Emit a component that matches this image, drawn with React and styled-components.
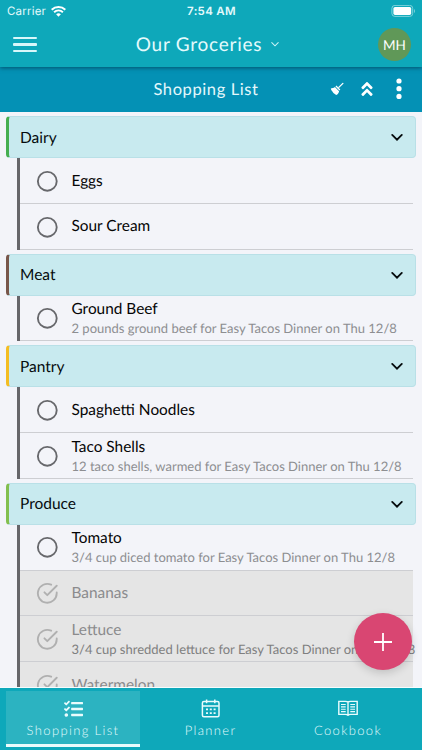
import React from 'react'
import styled, { createGlobalStyle } from 'styled-components'
import { FaAngleDoubleUp, FaTasks } from 'react-icons/fa'

const GlobalStyle = createGlobalStyle`
  * {
    box-sizing: border-box;
  }

  body {
    margin: 0;
    background: #f3f4f9;
    font-family: Lato, 'Open Sans', sans-serif;
    text-rendering: geometricPrecision;
  }
`

const Screen = styled.div`
  position: relative;
  width: 422px;
  height: 750px;
  display: flex;
  flex-direction: column;
  overflow: hidden;
  background: #f3f4f9;
`

const TopArea = styled.header`
  flex: none;
  height: 67px;
  background: #0ea8ba;
  color: #e4fafc;
  box-shadow: 0 1px 4px rgba(0, 40, 60, 0.6);
  z-index: 1;
`

const StatusBar = styled.div`
  height: 22px;
  padding: 0 6px 0 7px;
  display: grid;
  grid-template-columns: 1fr auto 1fr;
  align-items: center;
  font-family: Inter, sans-serif;
  font-size: 11.5px;
`

const Carrier = styled.div`
  display: flex;
  align-items: center;
  gap: 5px;
  letter-spacing: 0.2px;
`

const Clock = styled.div`
  font-weight: 600;
  letter-spacing: 0.3px;
`

const Battery = styled.svg`
  width: 25px;
  height: 13px;
  justify-self: end;
`

const TitleBar = styled.div`
  height: 45px;
  padding: 0 11px 0 13px;
  display: grid;
  grid-template-columns: 32px 1fr 41px;
  align-items: center;
`

const MenuButton = styled.div`
  width: 24px;
  height: 15px;
  display: flex;
  flex-direction: column;
  justify-content: space-between;

  span {
    height: 2.3px;
    border-radius: 1px;
    background: #d8f7fa;
  }
`

const Household = styled.div`
  display: flex;
  align-items: center;
  justify-content: center;
  gap: 9px;
  font-size: 19px;
  letter-spacing: 0.75px;
  line-height: 24px;
`

const Avatar = styled.div`
  width: 33px;
  height: 33px;
  border-radius: 50%;
  justify-self: end;
  display: flex;
  align-items: center;
  justify-content: center;
  background: #609858;
  color: #fff;
  font-size: 13.5px;
`

const SubHeader = styled.div`
  flex: none;
  height: 45px;
  padding-right: 10px;
  display: grid;
  grid-template-columns: 1fr auto 1fr;
  align-items: center;
  background: #0491b5;
  color: #e4f8fc;
  font-size: 16.5px;
  letter-spacing: 0.6px;
`

const PageTitle = styled.div`
  grid-column: 2;
  padding-bottom: 1px;
`

const Tools = styled.div`
  padding: 0 9px 1px 0;
  display: flex;
  align-items: center;
  justify-content: flex-end;
  gap: 14px;
  color: #fff;
`

const MoreIcon = styled.svg`
  width: 8px;
  height: 22px;
  margin-left: 5px;
  fill: #fff;
`

const List = styled.main`
  flex: 1 1 auto;
  min-height: 0;
  padding: 4.3px 6.5px 0 6px;
  overflow: hidden;
`

const GroupHeader = styled.div`
  height: 41.9px;
  padding: 1px 11.5px 0 11px;
  display: flex;
  align-items: center;
  justify-content: space-between;
  border: 1px solid #b9e0e7;
  border-left: 3px solid ${({ $color }) => $color};
  border-radius: 4px;
  background: #c8eaef;
  color: #050b0d;
  font-size: 15.5px;
`

const Items = styled.div`
  margin: 0 2.5px 4px 10.5px;
  border-left: 3px solid #66666a;
`

const Item = styled.div`
  height: 45.8px;
  padding: 1px 0 0 16px;
  display: flex;
  align-items: center;
  gap: 13.4px;
  border-bottom: 1px solid #cdced2;
  background: ${({ $done }) => ($done ? '#e5e5e5' : 'transparent')};
  color: ${({ $done }) => ($done ? '#8b8b8d' : '#050505')};
  white-space: nowrap;
`

const Check = styled.svg`
  flex: none;
  width: 22.6px;
  height: 22.6px;
  fill: none;
  stroke: ${({ $done }) => ($done ? '#b0b0b0' : '#67686c')};
  stroke-width: 2;
  stroke-linecap: round;
  stroke-linejoin: round;
`

const ItemName = styled.div`
  font-size: 15.4px;
  line-height: 19px;
`

const ItemNote = styled.div`
  font-size: 13px;
  line-height: 18px;
  color: ${({ $done }) => ($done ? '#7f7f80' : '#8d8e91')};
`

const Fab = styled.div`
  position: absolute;
  left: 354px;
  top: 613px;
  width: 58px;
  height: 57px;
  border-radius: 50%;
  display: flex;
  align-items: center;
  justify-content: center;
  background: #d94672;
  box-shadow: 0 3px 8px rgba(0, 0, 0, 0.16);
`

const Nav = styled.nav`
  flex: none;
  height: 63px;
  padding: 3px 7px 3px 6px;
  display: grid;
  grid-template-columns: 134px 1fr 134px;
  gap: 3px;
  background: #0ea8ba;
  background-clip: padding-box;
  border-top: 1px solid #f6fdfe;
`

const Tab = styled.div`
  padding-top: 8px;
  display: flex;
  flex-direction: column;
  align-items: center;
  gap: 3px;
  background: ${({ $active }) => ($active ? '#2cb3c1' : 'transparent')};
  border-bottom: 3px solid ${({ $active }) => ($active ? '#e9fbfc' : 'transparent')};
  color: #e2fbfd;
  font-size: 13px;
  font-weight: 300;
  line-height: 17px;
  letter-spacing: 1.35px;

  svg {
    flex: none;
    height: 20px;
    color: #e9fcfd;
  }
`

const Chevron = ({ width, stroke, color }) => (
  <svg width={width} height={width * 0.6} viewBox="0 0 10 6" fill="none">
    <path d="M1 .8 5 4.8 9 .8" stroke={color} strokeWidth={stroke} strokeLinecap="round" />
  </svg>
)

const WifiIcon = () => (
  <svg width="15" height="11" viewBox="0 0 15 11" fill="none" stroke="#fff">
    <path d="M.7 3.8a9.7 9.7 0 0 1 13.6 0" strokeWidth="2" />
    <path d="M3.1 6.2a6.3 6.3 0 0 1 8.8 0" strokeWidth="1.9" />
    <path d="M5.1 8.3a3.5 3.5 0 0 1 4.8 0L7.5 10.8Z" fill="#fff" stroke="none" />
  </svg>
)

const BroomIcon = () => (
  <svg width="14" height="14" viewBox="0 0 14 14" fill="#fff">
    <path d="M12.9 1.4 8.8 5.4" stroke="#fff" strokeWidth="1.3" strokeLinecap="round" />
    <path d="M6.4 3.6 10.3 7.5 9.4 8.5 5.5 4.6Z" />
    <path d="M4.9 5 9.1 9.2C8.8 11 7.8 12.3 6.2 13L4.8 12 3.4 10.9 2.4 9.6 1.4 8.2.8 6.4C2 6.4 3.8 6 4.9 5Z" />
  </svg>
)

const CheckIcon = ({ done }) => (
  <Check viewBox="0 0 24 24" $done={done}>
    {done ? (
      <>
        <path d="M22 11.08V12a10 10 0 1 1-5.93-9.14" />
        <path d="M22 4 12 14.01l-3-3" />
      </>
    ) : (
      <circle cx="12" cy="12" r="10" />
    )}
  </Check>
)

const CalendarIcon = () => (
  <svg width="20" height="20" viewBox="0 0 20 20" fill="none" stroke="currentColor" strokeWidth="1.5">
    <rect x="1.4" y="2.6" width="16.6" height="15.2" rx="1.5" />
    <path d="M1.6 7h16.2M5.6 .6v3.6M13.8 .6v3.6" />
    <path d="M8.8 10.4h2M12.6 10.4h2M5 14.2h2M8.8 14.2h2M12.6 14.2h2M5 10.4h2" strokeWidth="1.7" />
  </svg>
)

const BookIcon = () => (
  <svg width="20" height="20" viewBox="0 0 20 20" fill="none" stroke="currentColor" strokeWidth="1.4">
    <path d="M10 3.1C9.4 2.5 8.6 2.4 7.5 2.4H.8v13h6.7c1.1 0 1.9.1 2.5.7.6-.6 1.4-.7 2.5-.7h6.7v-13h-6.7c-1.1 0-1.9.1-2.5.7Zm0 0v13.8" />
    <path d="M3 5.5h4.7M3 7.9h4.7M3 10.2h4.7M3 12.6h4.7M12.3 5.5H17M12.3 7.9H17M12.3 10.2H17M12.3 12.6H17" strokeWidth="1.1" />
  </svg>
)

const groups = [
  { name: 'Dairy', color: '#45ae50', items: [{ name: 'Eggs' }, { name: 'Sour Cream' }] },
  {
    name: 'Meat',
    color: '#78564a',
    items: [{ name: 'Ground Beef', note: '2 pounds ground beef for Easy Tacos Dinner on Thu 12/8' }],
  },
  {
    name: 'Pantry',
    color: '#f4bd22',
    items: [
      { name: 'Spaghetti Noodles' },
      { name: 'Taco Shells', note: '12 taco shells, warmed for Easy Tacos Dinner on Thu 12/8' },
    ],
  },
  {
    name: 'Produce',
    color: '#82bf4e',
    items: [
      { name: 'Tomato', note: '3/4 cup diced tomato for Easy Tacos Dinner on Thu 12/8' },
      { name: 'Bananas', done: true },
      { name: 'Lettuce', note: '3/4 cup shredded lettuce for Easy Tacos Dinner on Thu 12/8', done: true },
      { name: 'Watermelon', done: true },
    ],
  },
]

const Group = ({ name, color, items }) => (
  <section>
    <GroupHeader $color={color}>
      {name}
      <Chevron width={12} stroke={1.5} color="#050b0d" />
    </GroupHeader>
    <Items>
      {items.map(item => (
        <Item key={item.name} $done={item.done}>
          <CheckIcon done={item.done} />
          <div>
            <ItemName>{item.name}</ItemName>
            {item.note && <ItemNote $done={item.done}>{item.note}</ItemNote>}
          </div>
        </Item>
      ))}
    </Items>
  </section>
)

const App = () => (
  <>
    <GlobalStyle />
    <Screen>
      <TopArea>
        <StatusBar>
          <Carrier>
            Carrier
            <WifiIcon />
          </Carrier>
          <Clock>7:54 AM</Clock>
          <Battery viewBox="0 0 25 13">
            <rect x=".9" y=".4" width="20.8" height="11" rx="3" fill="none" stroke="#7fd3dc" />
            <rect x="2.4" y="1.9" width="17.8" height="8" rx="1.6" fill="#fff" />
            <path d="M23 4v4c1.3-.5 1.3-3.5 0-4Z" fill="#7fd3dc" />
          </Battery>
        </StatusBar>
        <TitleBar>
          <MenuButton>
            <span />
            <span />
            <span />
          </MenuButton>
          <Household>
            Our Groceries
            <Chevron width={8} stroke={1.3} color="#c9f3f6" />
          </Household>
          <Avatar>MH</Avatar>
        </TitleBar>
      </TopArea>
      <SubHeader>
        <PageTitle>Shopping List</PageTitle>
        <Tools>
          <BroomIcon />
          <FaAngleDoubleUp size={18} />
          <MoreIcon viewBox="0 0 8 22">
            <circle cx="4" cy="3" r="2.6" />
            <circle cx="4" cy="10.7" r="2.6" />
            <circle cx="4" cy="18.4" r="2.6" />
          </MoreIcon>
        </Tools>
      </SubHeader>
      <List>
        {groups.map(group => (
          <Group key={group.name} {...group} />
        ))}
      </List>
      <Nav>
        <Tab $active>
          <FaTasks size={19} />
          Shopping List
        </Tab>
        <Tab>
          <CalendarIcon />
          Planner
        </Tab>
        <Tab>
          <BookIcon />
          Cookbook
        </Tab>
      </Nav>
      <Fab>
        <svg width="20" height="20" viewBox="0 0 20 20" stroke="#fff" strokeWidth="1.8">
          <path d="M1 10h18M10 1v18" />
        </svg>
      </Fab>
    </Screen>
  </>
)

export default App
